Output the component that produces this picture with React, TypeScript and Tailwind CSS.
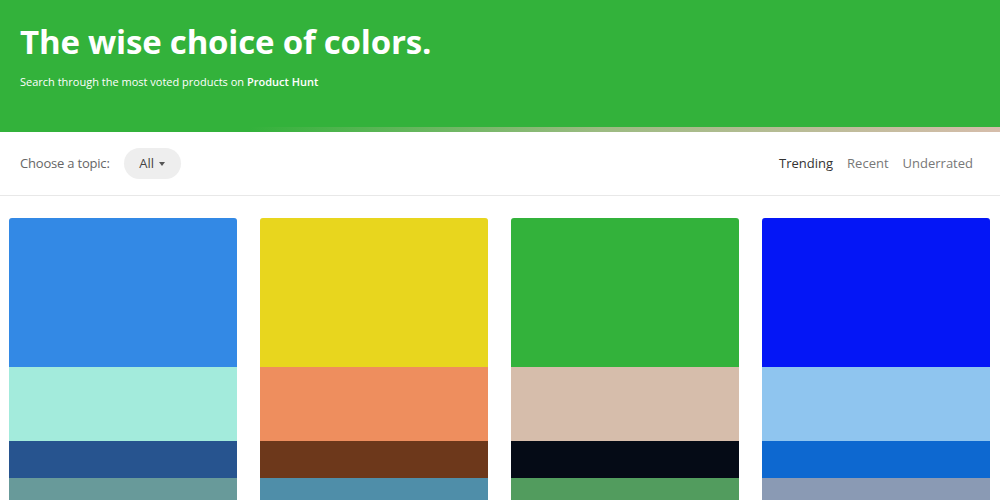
const palettes: string[][] = [
  ["#3389e5", "#a3ebdc", "#27548f", "#689a9a"],
  ["#e8d61e", "#ee8e5e", "#6d381b", "#4f8ea9"],
  ["#33b23b", "#d6bdab", "#050b16", "#529c5e"],
  ["#0416f6", "#8fc5ef", "#0d68d0", "#8a9ab4"],
];

const heights = ["h-[149px]", "h-[74px]", "h-[37px]", "h-[60px]"];

function Palette({ colors }: { colors: string[] }) {
  return (
    <div className="flex flex-col rounded-t-[3px] overflow-hidden shadow-[inset_0_0_0_1px_rgba(0,0,0,0.08)]">
      {colors.map((c, i) => (
        <div key={i} className={heights[i]} style={{ backgroundColor: c }} />
      ))}
    </div>
  );
}

export default function App() {
  return (
    <div className="w-[1000px] h-[500px] overflow-hidden bg-white font-['Open_Sans',sans-serif]">
      <header className="bg-[#33b23b] h-[127px] px-5 pt-[20px]">
        <h1 className="text-white text-[33px] font-bold leading-[44px] tracking-[-0.2px]">
          The wise choice of colors.
        </h1>
        <p className="text-white text-[11px] mt-[10px]">
          Search through the most voted products on <span className="font-semibold">Product Hunt</span>
        </p>
      </header>
      <div className="h-[5px] bg-[linear-gradient(to_right,#33b23b_25%,#9cbb82_60%,#d6bdab)]" />
      <div className="h-[64px] flex items-center justify-between px-5 border-b border-[#e8e8e8]">
        <div className="flex items-center gap-[14px]">
          <span className="text-[13px] text-[#666] tracking-[-0.2px]">Choose a topic:</span>
          <button className="h-[31px] w-[57px] rounded-full bg-[#eeeeee] flex items-center justify-center gap-[5px] text-[13px] text-[#444]">
            All
            <span className="w-0 h-0 border-l-[3px] border-r-[3px] border-t-[4px] border-l-transparent border-r-transparent border-t-[#555]" />
          </button>
        </div>
        <nav className="flex items-center gap-[14px] text-[13px]">
          <span className="text-[#333]">Trending</span>
          <span className="text-[#777]">Recent</span>
          <span className="text-[#777] mr-[7px]">Underrated</span>
        </nav>
      </div>
      <div className="grid grid-cols-4 gap-[23px] pl-[9px] pr-[10px] pt-[22px]">
        {palettes.map((p, i) => (
          <Palette key={i} colors={p} />
        ))}
      </div>
    </div>
  );
}
